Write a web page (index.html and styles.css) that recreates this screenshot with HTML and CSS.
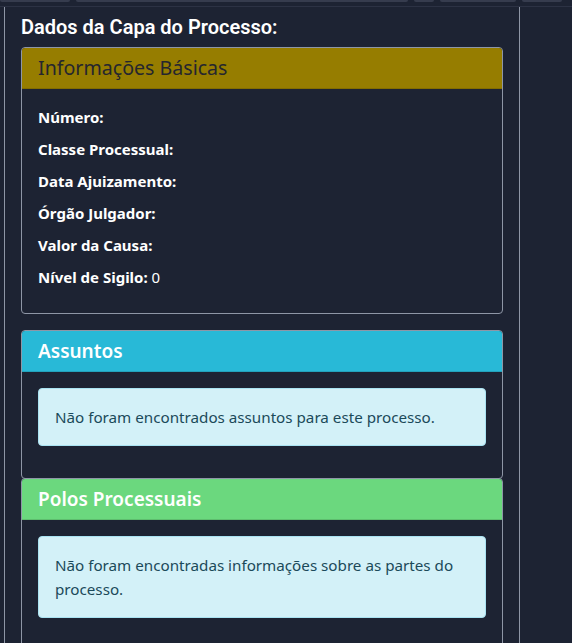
FILE: index.html
```html
<!DOCTYPE html>
<html lang="pt-BR">
<head>
<meta charset="utf-8">
<title>Dados da Capa do Processo</title>
<link rel="stylesheet" href="styles.css">
</head>
<body>
<div class="topbar">
  <span class="tb tb-a"></span>
  <span class="tb tb-b"></span>
  <span class="tb tb-c"></span>
  <span class="tb tb-d"></span>
  <span class="tb tb-e"></span>
</div>
<div class="layout">
  <main class="panel">
    <h2 class="title">Dados da Capa do Processo:</h2>

    <section class="card card-first">
      <div class="card-header hdr-warning">Informações Básicas</div>
      <div class="card-body">
        <p class="row"><strong>Número:</strong></p>
        <p class="row"><strong>Classe Processual:</strong></p>
        <p class="row"><strong>Data Ajuizamento:</strong></p>
        <p class="row"><strong>Órgão Julgador:</strong></p>
        <p class="row"><strong>Valor da Causa:</strong></p>
        <p class="row"><strong>Nível de Sigilo:</strong> 0</p>
      </div>
    </section>

    <section class="card">
      <div class="card-header hdr-info">Assuntos</div>
      <div class="card-body">
        <div class="alert">Não foram encontrados assuntos para este processo.</div>
      </div>
    </section>

    <section class="card">
      <div class="card-header hdr-success">Polos Processuais</div>
      <div class="card-body">
        <div class="alert">Não foram encontradas informações sobre as partes do processo.</div>
      </div>
    </section>
  </main>
  <aside class="side"></aside>
</div>
</body>
</html>
```

FILE: styles.css
```css
* { box-sizing: border-box; }

html, body {
  margin: 0;
  padding: 0;
  background: #1d2333;
  height: 100%;
  overflow: hidden;
}

body {
  font-family: "Noto Sans", Roboto, sans-serif;
  color: #ffffff;
}

.topbar {
  height: 7px;
  border-bottom: 1px solid #2c3244;
  display: flex;
  align-items: flex-start;
}

.tb {
  height: 2px;
  background: #363c4e;
  border-radius: 0 0 4px 4px;
  margin-right: 6px;
}
.tb-a { width: 70px; }
.tb-b { width: 332px; }
.tb-c { width: 20px; }
.tb-d { width: 76px; }
.tb-e { width: 40px; }

.layout {
  display: flex;
  height: calc(100% - 7px);
}

.panel {
  width: 516px;
  margin-left: 4px;
  border-left: 1px solid #8e96a6;
  border-right: 1px solid #8e96a6;
  padding: 0 16px;
}

.title {
  margin: 8px 0 8px;
  font-family: Roboto, "Noto Sans", sans-serif;
  font-size: 20px;
  font-weight: 600;
  line-height: 24px;
}

.card {
  border: 1px solid #8e96a6;
  border-radius: 4px;
  overflow: hidden;
}

.card-first { margin-bottom: 17px; }

.card + .card { margin-top: -1px; }

.card-header {
  padding: 8px 16px;
  font-size: 19px;
  font-weight: 600;
  line-height: 24px;
  border-bottom: 1px solid rgba(0, 0, 0, 0.12);
}

.hdr-warning { background: #967d00; color: #25262e; font-weight: 400; font-size: 19.6px; }
.hdr-info { background: #28b9d7; color: #ffffff; }
.hdr-success { background: #6bd87e; color: #ffffff; }

.card-body {
  padding: 16px;
}

.row {
  margin: 0 0 8px;
  font-size: 15px;
  line-height: 24px;
}

.row strong { font-weight: 700; }

.alert {
  background: #d3f1f8;
  border: 1px solid #a9e3f2;
  border-radius: 4px;
  color: #1b4a5a;
  padding: 16px;
  font-size: 15.2px;
  line-height: 24px;
  margin-bottom: 16px;
}
```
